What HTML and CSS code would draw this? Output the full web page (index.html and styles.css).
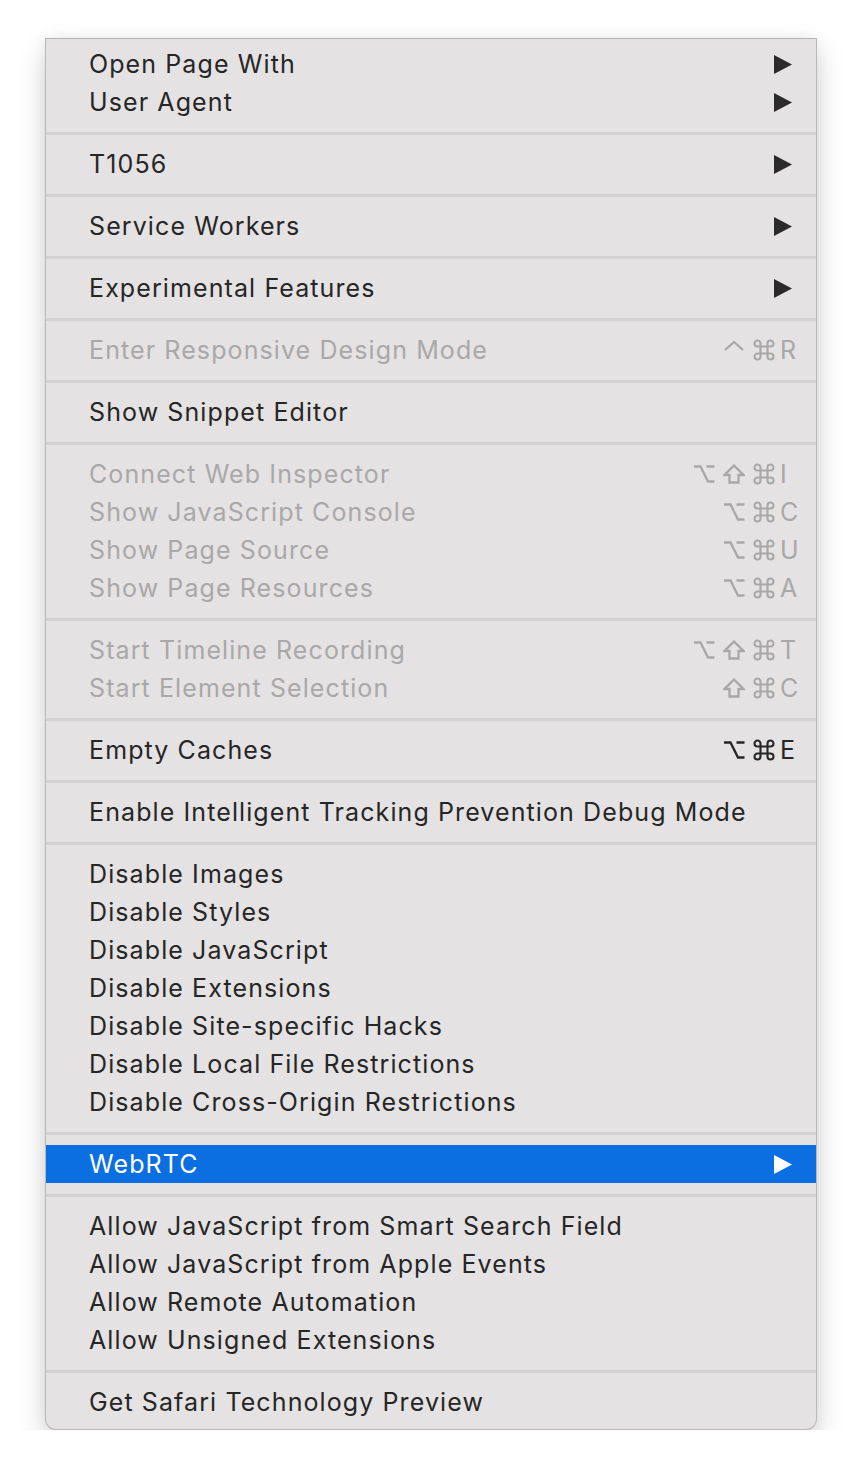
FILE: index.html
```html
<!DOCTYPE html>
<html lang="en">
<head>
    <meta charset="UTF-8">
    <title>Develop menu</title>
    <link rel="stylesheet" href="styles.css">
</head>
<body>
    <div class="menu">
        <div class="item"><span class="label">Open Page With</span><svg class="arrow" viewBox="0 0 18 19"><polygon points="0,0 18,9.5 0,19"/></svg></div>
        <div class="item"><span class="label">User Agent</span><svg class="arrow" viewBox="0 0 18 19"><polygon points="0,0 18,9.5 0,19"/></svg></div>
        <div class="sep"></div>
        <div class="item"><span class="label">T1056</span><svg class="arrow" viewBox="0 0 18 19"><polygon points="0,0 18,9.5 0,19"/></svg></div>
        <div class="sep"></div>
        <div class="item"><span class="label">Service Workers</span><svg class="arrow" viewBox="0 0 18 19"><polygon points="0,0 18,9.5 0,19"/></svg></div>
        <div class="sep"></div>
        <div class="item"><span class="label">Experimental Features</span><svg class="arrow" viewBox="0 0 18 19"><polygon points="0,0 18,9.5 0,19"/></svg></div>
        <div class="sep"></div>
        <div class="item off"><span class="label">Enter Responsive Design Mode</span>
            <span class="keys">
                <svg class="mod" viewBox="0 0 22 20"><polyline points="2,10 11,2 20,10"/></svg>
                <svg class="mod cmd" viewBox="0 0 22 22"><path d="M7.5 7.5V4.5A3 3 0 1 0 4.5 7.5H17.5A3 3 0 1 0 14.5 4.5V17.5A3 3 0 1 0 17.5 14.5H4.5A3 3 0 1 0 7.5 17.5Z"/></svg>
                <span class="key">R</span>
            </span></div>
        <div class="sep"></div>
        <div class="item"><span class="label">Show Snippet Editor</span></div>
        <div class="sep"></div>
        <div class="item off"><span class="label">Connect Web Inspector</span>
            <span class="keys">
                <svg class="mod" viewBox="0 0 22 20"><path d="M1 2.5H7.5L15 17.5H21.5M13.5 2.5H21.5"/></svg>
                <svg class="mod" viewBox="0 0 22 20"><path d="M11 1.5L20.5 11H15.5V18.5H6.5V11H1.5Z"/></svg>
                <svg class="mod cmd" viewBox="0 0 22 22"><path d="M7.5 7.5V4.5A3 3 0 1 0 4.5 7.5H17.5A3 3 0 1 0 14.5 4.5V17.5A3 3 0 1 0 17.5 14.5H4.5A3 3 0 1 0 7.5 17.5Z"/></svg>
                <span class="key">I</span>
            </span></div>
        <div class="item off"><span class="label">Show JavaScript Console</span>
            <span class="keys">
                <svg class="mod" viewBox="0 0 22 20"><path d="M1 2.5H7.5L15 17.5H21.5M13.5 2.5H21.5"/></svg>
                <svg class="mod cmd" viewBox="0 0 22 22"><path d="M7.5 7.5V4.5A3 3 0 1 0 4.5 7.5H17.5A3 3 0 1 0 14.5 4.5V17.5A3 3 0 1 0 17.5 14.5H4.5A3 3 0 1 0 7.5 17.5Z"/></svg>
                <span class="key">C</span>
            </span></div>
        <div class="item off"><span class="label">Show Page Source</span>
            <span class="keys">
                <svg class="mod" viewBox="0 0 22 20"><path d="M1 2.5H7.5L15 17.5H21.5M13.5 2.5H21.5"/></svg>
                <svg class="mod cmd" viewBox="0 0 22 22"><path d="M7.5 7.5V4.5A3 3 0 1 0 4.5 7.5H17.5A3 3 0 1 0 14.5 4.5V17.5A3 3 0 1 0 17.5 14.5H4.5A3 3 0 1 0 7.5 17.5Z"/></svg>
                <span class="key">U</span>
            </span></div>
        <div class="item off"><span class="label">Show Page Resources</span>
            <span class="keys">
                <svg class="mod" viewBox="0 0 22 20"><path d="M1 2.5H7.5L15 17.5H21.5M13.5 2.5H21.5"/></svg>
                <svg class="mod cmd" viewBox="0 0 22 22"><path d="M7.5 7.5V4.5A3 3 0 1 0 4.5 7.5H17.5A3 3 0 1 0 14.5 4.5V17.5A3 3 0 1 0 17.5 14.5H4.5A3 3 0 1 0 7.5 17.5Z"/></svg>
                <span class="key">A</span>
            </span></div>
        <div class="sep"></div>
        <div class="item off"><span class="label">Start Timeline Recording</span>
            <span class="keys">
                <svg class="mod" viewBox="0 0 22 20"><path d="M1 2.5H7.5L15 17.5H21.5M13.5 2.5H21.5"/></svg>
                <svg class="mod" viewBox="0 0 22 20"><path d="M11 1.5L20.5 11H15.5V18.5H6.5V11H1.5Z"/></svg>
                <svg class="mod cmd" viewBox="0 0 22 22"><path d="M7.5 7.5V4.5A3 3 0 1 0 4.5 7.5H17.5A3 3 0 1 0 14.5 4.5V17.5A3 3 0 1 0 17.5 14.5H4.5A3 3 0 1 0 7.5 17.5Z"/></svg>
                <span class="key">T</span>
            </span></div>
        <div class="item off"><span class="label">Start Element Selection</span>
            <span class="keys">
                <svg class="mod" viewBox="0 0 22 20"><path d="M11 1.5L20.5 11H15.5V18.5H6.5V11H1.5Z"/></svg>
                <svg class="mod cmd" viewBox="0 0 22 22"><path d="M7.5 7.5V4.5A3 3 0 1 0 4.5 7.5H17.5A3 3 0 1 0 14.5 4.5V17.5A3 3 0 1 0 17.5 14.5H4.5A3 3 0 1 0 7.5 17.5Z"/></svg>
                <span class="key">C</span>
            </span></div>
        <div class="sep"></div>
        <div class="item"><span class="label">Empty Caches</span>
            <span class="keys">
                <svg class="mod" viewBox="0 0 22 20"><path d="M1 2.5H7.5L15 17.5H21.5M13.5 2.5H21.5"/></svg>
                <svg class="mod cmd" viewBox="0 0 22 22"><path d="M7.5 7.5V4.5A3 3 0 1 0 4.5 7.5H17.5A3 3 0 1 0 14.5 4.5V17.5A3 3 0 1 0 17.5 14.5H4.5A3 3 0 1 0 7.5 17.5Z"/></svg>
                <span class="key">E</span>
            </span></div>
        <div class="sep"></div>
        <div class="item"><span class="label">Enable Intelligent Tracking Prevention Debug Mode</span></div>
        <div class="sep"></div>
        <div class="item"><span class="label">Disable Images</span></div>
        <div class="item"><span class="label">Disable Styles</span></div>
        <div class="item"><span class="label">Disable JavaScript</span></div>
        <div class="item"><span class="label">Disable Extensions</span></div>
        <div class="item"><span class="label">Disable Site-specific Hacks</span></div>
        <div class="item"><span class="label">Disable Local File Restrictions</span></div>
        <div class="item"><span class="label">Disable Cross-Origin Restrictions</span></div>
        <div class="sep"></div>
        <div class="item active"><span class="label">WebRTC</span><svg class="arrow" viewBox="0 0 18 19"><polygon points="0,0 18,9.5 0,19"/></svg></div>
        <div class="sep"></div>
        <div class="item"><span class="label">Allow JavaScript from Smart Search Field</span></div>
        <div class="item"><span class="label">Allow JavaScript from Apple Events</span></div>
        <div class="item"><span class="label">Allow Remote Automation</span></div>
        <div class="item"><span class="label">Allow Unsigned Extensions</span></div>
        <div class="sep"></div>
        <div class="item"><span class="label">Get Safari Technology Preview</span></div>
    </div>
</body>
</html>
```

FILE: styles.css
```css
*{
    margin: 0;
    padding: 0;
    box-sizing: border-box;
}
body {
    background: #fff;
    padding: 38px 0 0 45px;
    font-family: Inter, "Liberation Sans", sans-serif;
}
.menu {
    width: 772px;
    padding: 6px 0 8px;
    background: #e4e2e3;
    border: 1px solid #b9b8b9;
    border-top-color: #b3b3b3;
    border-radius: 0 0 11px 11px;
    box-shadow: 0 12px 28px rgba(0,0,0,0.18), 0 0 14px rgba(0,0,0,0.05);
}
.item {
    display: flex;
    align-items: center;
    height: 38px;
    padding: 0 19px 0 43px;
    font-size: 25px;
    letter-spacing: 1.1px;
    color: #262626;
}
.item .label {
    flex: 1;
    white-space: nowrap;
}
.item.off {
    color: #a9a8a9;
}
.item.active {
    background: #0b6fe1;
    color: #fff;
}
.arrow {
    width: 18px;
    height: 19px;
    margin-right: 5px;
    fill: #2b2b2b;
}
.active .arrow {
    fill: #fff;
}
.keys {
    display: flex;
    align-items: center;
    gap: 8px;
}
.mod {
    width: 22px;
    height: 20px;
    fill: none;
    stroke: currentColor;
    stroke-width: 2.3;
    stroke-linejoin: miter;
}
.mod.cmd {
    height: 22px;
    stroke-width: 2.1;
}
.key {
    width: 17px;
    margin-left: -3px;
    letter-spacing: 0;
}
.sep {
    height: 3px;
    margin: 11px 0 10px;
    background: #d3d1d2;
}
```
